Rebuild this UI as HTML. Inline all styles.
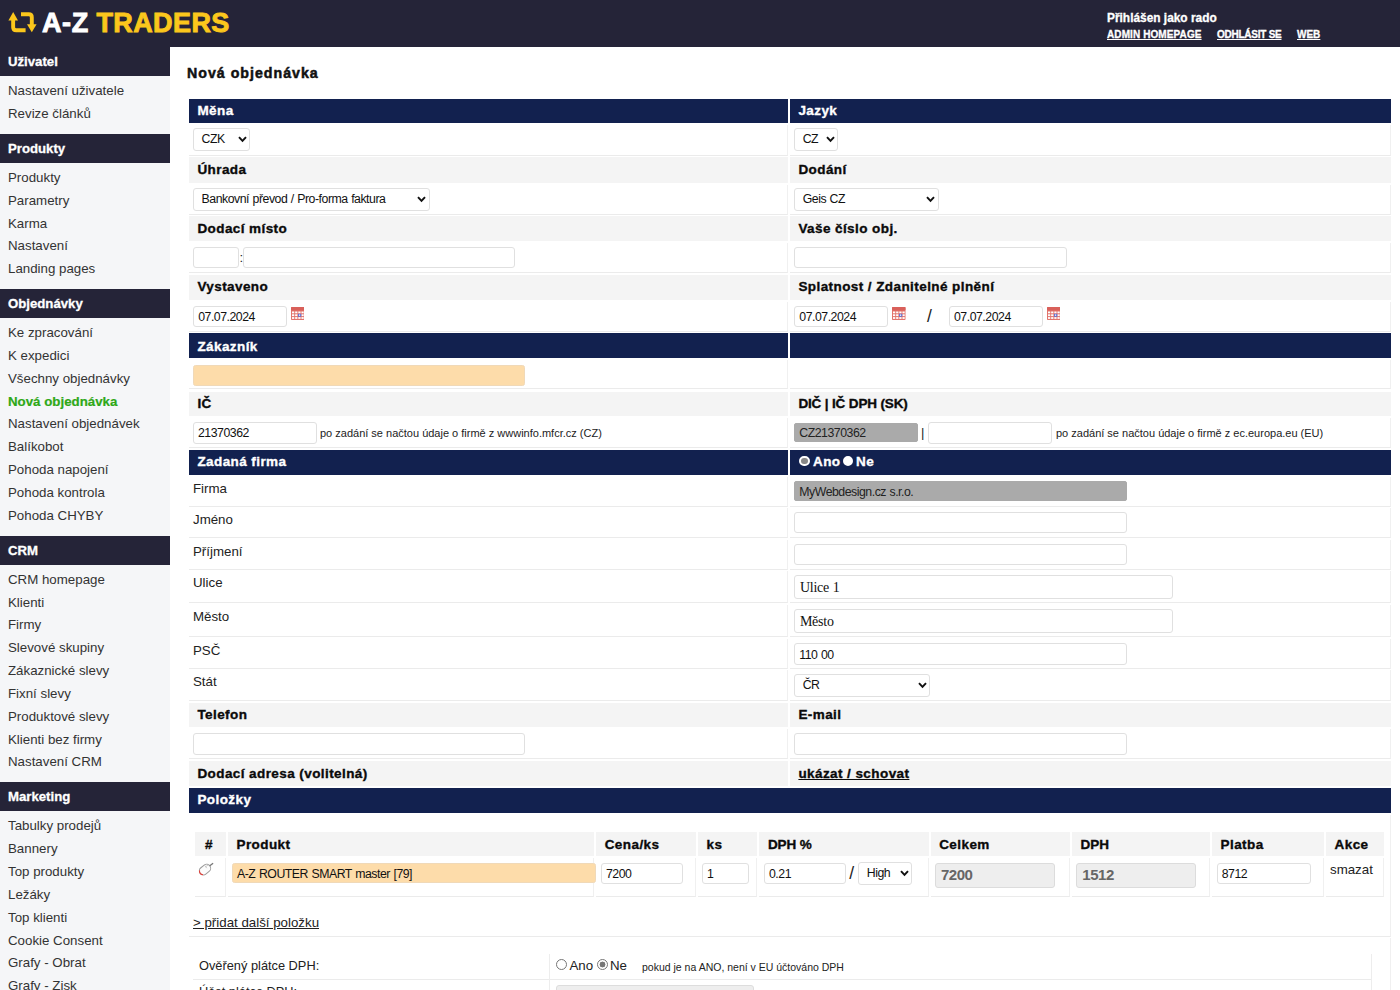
<!DOCTYPE html>
<html lang="cs">
<head>
<meta charset="utf-8">
<title>A-Z TRADERS - Nová objednávka</title>
<style>
*{box-sizing:border-box}
html,body{margin:0;padding:0}
body{width:1400px;height:990px;overflow:hidden;background:#fff;position:relative;font-family:"Liberation Sans",sans-serif;color:#1a1a1a}
#top{position:absolute;left:0;top:0;width:1400px;height:47px;background:#252438}
#logo{position:absolute;left:42px;top:7.2px;font-weight:bold;font-size:27px;line-height:32px;letter-spacing:.6px;color:#fff;white-space:nowrap;-webkit-text-stroke:.9px #fff}
#logo b{position:absolute;left:54.4px;top:0;color:#fbc71c;letter-spacing:.4px;-webkit-text-stroke:.9px #fbc71c}
#logoicon{position:absolute;left:8px;top:11px}
#user{position:absolute;left:1107px;top:10.6px;color:#fff;-webkit-text-stroke:.3px #fff;font-weight:bold;font-size:11.9px;line-height:14px;white-space:nowrap}
#toplinks{position:absolute;left:1107px;top:28px;color:#fff;-webkit-text-stroke:.3px #fff;font-weight:bold;font-size:10px;line-height:13px;white-space:nowrap}
#toplinks a{position:absolute;top:0;color:#fff;text-decoration:underline}
#side{position:absolute;left:0;top:47px;width:170px;height:943px;background:#f5f6f8;overflow:hidden}
#side h3{margin:0;height:29px;background:#252438;color:#fff;-webkit-text-stroke:.3px #fff;font-size:13.2px;line-height:29px;padding-left:8px;font-weight:bold}
#side ul{list-style:none;margin:0;padding:3.5px 0 8.5px 8px}
#side li{height:22.85px;line-height:22.85px;font-size:13.3px;color:#333;white-space:nowrap;position:relative;top:.7px}
#side li.act{color:#2ea817;font-weight:bold;-webkit-text-stroke:.2px #2ea817}
#main{position:absolute;left:170px;top:47px;width:1230px;height:943px;background:#fff}
h1{position:absolute;left:187px;top:62.6px;margin:0;font-size:14.2px;line-height:20px;font-weight:bold;color:#111;letter-spacing:1px;white-space:nowrap;-webkit-text-stroke:.5px #111}
.r{position:absolute;left:189px;width:1202px}
.c{position:absolute;top:0;height:100%;white-space:nowrap}
.c.l{left:0;width:599px}
.c.rr{left:601px;width:601px}
.c.f{left:0;width:1202px}
.dk .c{background:#12214f;color:#fff;font-weight:bold;font-size:13.5px;letter-spacing:.42px;padding-left:8.4px;padding-top:.4px;-webkit-text-stroke:.35px #fff}
.gy .c{background:#f4f4f4;color:#0a0a0a;font-weight:bold;font-size:13.5px;letter-spacing:.42px;padding-left:8.4px;padding-top:.4px;-webkit-text-stroke:.35px #0a0a0a}
.gy u{text-decoration:underline}
.td .c{border-bottom:1px solid #ebebeb;border-right:1px solid #f0f0f0;font-size:13px;color:#222;line-height:normal}
.td.nb .c{border-bottom:0}
.lb{position:absolute;left:4px;top:3px;font-size:13.3px;line-height:17px;color:#222}
.x{position:absolute;font-size:13px;color:#222;white-space:nowrap}
.x.sm{font-size:11px;color:#222}
.x.sm2{font-size:10.5px;color:#222}
div.t,span.sel{position:absolute;display:block;border:1px solid #e0e0e0;border-radius:3px;background:#fff;font:12.3px "Liberation Sans",sans-serif;letter-spacing:-.48px;color:#111;padding:1px 4px 0;margin:0;outline:0;word-spacing:.6px;white-space:pre;overflow:hidden}
div.pe{background:#fddcaa;border-color:#f0d9b8;border-radius:2.5px}
div.ro{background:#aaa;border-color:#aaa;color:#222;border-radius:2px}
div.ro2{background:#eee;border-color:#ddd}
div.se{font:14px "Liberation Serif",serif;letter-spacing:-.25px;padding-left:4.6px}
div.bgi{background:#eee;border-color:#dcdcdc;font-weight:bold;font-size:15px;color:#666;padding-left:5px;padding-top:0;padding-bottom:1px}

span.sel{padding:0 0 0 7.4px;overflow:hidden}
span.sel svg{position:absolute;right:2.2px;top:50%;margin-top:-3.5px}
.cal{position:absolute}
.rad{position:absolute;width:10.5px;height:10.5px;border-radius:50%;background:#888;border:2px solid #fff}
.rad.on{background:#fff}
.rad2{position:absolute;width:11px;height:11px;border-radius:50%;background:#fff;border:1px solid #767676}
.rad2.on{background:radial-gradient(circle,#767676 0 2.7px,#fff 3.2px)}
.ih{position:absolute;background:#f4f4f4;font-weight:bold;font-size:13.5px;letter-spacing:.42px;padding-top:1px;-webkit-text-stroke:.35px #0a0a0a;color:#0a0a0a;padding-left:8.6px}
.ic{position:absolute;border-bottom:1px solid #ebebeb;border-right:1px solid #f0f0f0}
.hl{position:absolute;height:1px;background:#ebebeb}
.vl{position:absolute;width:1px;background:#ededed}
</style>
</head>
<body>
<div id="top">
  <svg id="logoicon" width="30" height="23" viewBox="8 11 30 23"><g fill="#fbc71c"><path d="M13.2 11.9 L18 20.4 H8.4 Z"/><path d="M27 24.2 H36.6 L31.8 32.3 Z"/></g><g fill="none" stroke="#fbc71c" stroke-width="3.9"><path d="M13.15 19 V27.2 Q13.15 30.2 16.2 30.2 H25.6"/><path d="M21 14.2 H28.8 Q31.8 14.2 31.8 17.2 V25.5"/></g></svg>
  <div id="logo">A-Z <b>TRADERS</b></div>
  <div id="user">Přihlášen jako rado</div>
  <div id="toplinks"><a style="left:0;letter-spacing:.1px">ADMIN HOMEPAGE</a><a style="left:110px;letter-spacing:-.25px">ODHLÁSIT SE</a><a style="left:190px">WEB</a></div>
</div>
<div id="side">
  <h3>Uživatel</h3>
  <ul><li>Nastavení uživatele</li><li>Revize článků</li></ul>
  <h3>Produkty</h3>
  <ul><li>Produkty</li><li>Parametry</li><li>Karma</li><li>Nastavení</li><li>Landing pages</li></ul>
  <h3>Objednávky</h3>
  <ul><li>Ke zpracování</li><li>K expedici</li><li>Všechny objednávky</li><li class="act">Nová objednávka</li><li>Nastavení objednávek</li><li>Balíkobot</li><li>Pohoda napojení</li><li>Pohoda kontrola</li><li>Pohoda CHYBY</li></ul>
  <h3>CRM</h3>
  <ul><li>CRM homepage</li><li>Klienti</li><li>Firmy</li><li>Slevové skupiny</li><li>Zákaznické slevy</li><li>Fixní slevy</li><li>Produktové slevy</li><li>Klienti bez firmy</li><li>Nastavení CRM</li></ul>
  <h3>Marketing</h3>
  <ul><li>Tabulky prodejů</li><li>Bannery</li><li>Top produkty</li><li>Ležáky</li><li>Top klienti</li><li>Cookie Consent</li><li>Grafy - Obrat</li><li>Grafy - Zisk</li></ul>
</div>
<div id="main"></div>
<h1>Nová objednávka</h1>
<div class="r dk" style="top:98.5px;height:24.0px;line-height:24.0px"><div class="c l">Měna</div><div class="c rr">Jazyk</div></div>
<div class="r td" style="top:124.5px;height:31.5px;line-height:31.5px"><div class="c l"><span class="sel " style="left:4.199999999999989px;top:3.9000000000000057px;width:57px;height:22.7px;line-height:21.099999999999998px">CZK<svg width="9" height="6.75" viewBox="0 0 8 6"><path d="M.9 1 L4 4.3 L7.1 1" fill="none" stroke="#111" stroke-width="1.75"/></svg></span></div><div class="c rr"><span class="sel " style="left:4.2999999999999545px;top:3.9000000000000057px;width:44px;height:22.7px;line-height:21.099999999999998px">CZ<svg width="9" height="6.75" viewBox="0 0 8 6"><path d="M.9 1 L4 4.3 L7.1 1" fill="none" stroke="#111" stroke-width="1.75"/></svg></span></div></div>
<div class="r gy" style="top:157px;height:25.5px;line-height:25.5px"><div class="c l">Úhrada</div><div class="c rr">Dodání</div></div>
<div class="r td" style="top:184.5px;height:30.2px;line-height:30.2px"><div class="c l"><span class="sel n" style="left:4.199999999999989px;top:3.5px;width:236.4px;height:23.0px;line-height:21.4px">Bankovní převod / Pro-forma faktura<svg width="9" height="6.75" viewBox="0 0 8 6"><path d="M.9 1 L4 4.3 L7.1 1" fill="none" stroke="#111" stroke-width="1.75"/></svg></span></div><div class="c rr"><span class="sel n" style="left:4.2999999999999545px;top:3.5px;width:144.3px;height:23.0px;line-height:21.4px">Geis CZ<svg width="9" height="6.75" viewBox="0 0 8 6"><path d="M.9 1 L4 4.3 L7.1 1" fill="none" stroke="#111" stroke-width="1.75"/></svg></span></div></div>
<div class="r gy" style="top:216px;height:25px;line-height:25px"><div class="c l">Dodací místo</div><div class="c rr">Vaše číslo obj.</div></div>
<div class="r td" style="top:243px;height:30.3px;line-height:30.3px"><div class="c l"><div class="t " style="left:4.199999999999989px;top:4.199999999999989px;width:45.5px;height:21.3px;line-height:19.3px"></div><span class="x" style="left:50.5px;top:4px;line-height:21px">:</span><div class="t " style="left:53.5px;top:4.199999999999989px;width:272.5px;height:21.3px;line-height:19.3px"></div></div><div class="c rr"><div class="t " style="left:4.2999999999999545px;top:4.199999999999989px;width:272.3px;height:21.3px;line-height:19.3px"></div></div></div>
<div class="r gy" style="top:275px;height:24.8px;line-height:24.8px"><div class="c l">Vystaveno</div><div class="c rr">Splatnost / Zdanitelné plnění</div></div>
<div class="r td" style="top:301.8px;height:30.7px;line-height:30.7px"><div class="c l"><div class="t d" style="left:4.199999999999989px;top:4.5px;width:93.5px;height:20.3px;line-height:18.3px">07.07.2024</div><svg class="cal" style="left:101.89999999999998px;top:5.300000000000011px" width="13.5" height="13" viewBox="0 0 27 26"><rect width="27" height="26" rx="1.5" fill="#e2746c"/><rect width="27" height="7" rx="1.5" fill="#d9605a"/><g fill="#fff"><rect x="2" y="9" width="4.5" height="3.6"/><rect x="8.3" y="9" width="4.5" height="3.6"/><rect x="14.6" y="9" width="4.5" height="3.6"/><rect x="20.9" y="9" width="4.5" height="3.6"/><rect x="2" y="14.6" width="4.5" height="3.6"/><rect x="8.3" y="14.6" width="4.5" height="3.6"/><rect x="20.9" y="14.6" width="4.5" height="3.6"/><rect x="2" y="20.2" width="4.5" height="3.6"/><rect x="8.3" y="20.2" width="4.5" height="3.6"/><rect x="14.6" y="20.2" width="4.5" height="3.6"/><rect x="20.9" y="20.2" width="4.5" height="3.6"/></g><rect x="14" y="13.6" width="6.5" height="5.8" fill="#5b6fd6"/><rect x="15.8" y="15" width="2.6" height="2.6" fill="#fff"/></svg></div><div class="c rr"><div class="t d" style="left:4.2999999999999545px;top:4.5px;width:94.2px;height:20.3px;line-height:18.3px">07.07.2024</div><svg class="cal" style="left:102.10000000000002px;top:5.300000000000011px" width="13.5" height="13" viewBox="0 0 27 26"><rect width="27" height="26" rx="1.5" fill="#e2746c"/><rect width="27" height="7" rx="1.5" fill="#d9605a"/><g fill="#fff"><rect x="2" y="9" width="4.5" height="3.6"/><rect x="8.3" y="9" width="4.5" height="3.6"/><rect x="14.6" y="9" width="4.5" height="3.6"/><rect x="20.9" y="9" width="4.5" height="3.6"/><rect x="2" y="14.6" width="4.5" height="3.6"/><rect x="8.3" y="14.6" width="4.5" height="3.6"/><rect x="20.9" y="14.6" width="4.5" height="3.6"/><rect x="2" y="20.2" width="4.5" height="3.6"/><rect x="8.3" y="20.2" width="4.5" height="3.6"/><rect x="14.6" y="20.2" width="4.5" height="3.6"/><rect x="20.9" y="20.2" width="4.5" height="3.6"/></g><rect x="14" y="13.6" width="6.5" height="5.8" fill="#5b6fd6"/><rect x="15.8" y="15" width="2.6" height="2.6" fill="#fff"/></svg><span class="x" style="left:136.89999999999998px;top:4.5px;line-height:21px;font-size:17.5px">/</span><div class="t d" style="left:159px;top:4.5px;width:94.2px;height:20.3px;line-height:18.3px">07.07.2024</div><svg class="cal" style="left:256.79999999999995px;top:5.300000000000011px" width="13.5" height="13" viewBox="0 0 27 26"><rect width="27" height="26" rx="1.5" fill="#e2746c"/><rect width="27" height="7" rx="1.5" fill="#d9605a"/><g fill="#fff"><rect x="2" y="9" width="4.5" height="3.6"/><rect x="8.3" y="9" width="4.5" height="3.6"/><rect x="14.6" y="9" width="4.5" height="3.6"/><rect x="20.9" y="9" width="4.5" height="3.6"/><rect x="2" y="14.6" width="4.5" height="3.6"/><rect x="8.3" y="14.6" width="4.5" height="3.6"/><rect x="20.9" y="14.6" width="4.5" height="3.6"/><rect x="2" y="20.2" width="4.5" height="3.6"/><rect x="8.3" y="20.2" width="4.5" height="3.6"/><rect x="14.6" y="20.2" width="4.5" height="3.6"/><rect x="20.9" y="20.2" width="4.5" height="3.6"/></g><rect x="14" y="13.6" width="6.5" height="5.8" fill="#5b6fd6"/><rect x="15.8" y="15" width="2.6" height="2.6" fill="#fff"/></svg></div></div>
<div class="r dk" style="top:333.2px;height:25.0px;line-height:25.0px"><div class="c l">Zákazník</div><div class="c rr"></div></div>
<div class="r td" style="top:360.2px;height:29.3px;line-height:29.3px"><div class="c l"><div class="t pe" style="left:4px;top:4.800000000000011px;width:331.5px;height:21px;line-height:19px"></div></div><div class="c rr"></div></div>
<div class="r gy" style="top:392px;height:24.2px;line-height:24.2px"><div class="c l">IČ</div><div class="c rr"><span style="letter-spacing:-.15px">DIČ | IČ DPH (SK)</span></div></div>
<div class="r td" style="top:418.2px;height:30.1px;line-height:30.1px"><div class="c l"><div class="t ic13" style="left:4px;top:4.0px;width:123.5px;height:21.5px;line-height:19.5px">21370362</div><span class="x sm" style="left:131px;top:3.8000000000000114px;line-height:22px">po zadání se načtou údaje o firmě z wwwinfo.mfcr.cz (CZ)</span></div><div class="c rr"><div class="t ro" style="left:4.2999999999999545px;top:4.800000000000011px;width:123.5px;height:19.5px;line-height:17.5px">CZ21370362</div><span class="x" style="left:131px;top:3.8000000000000114px;line-height:21px">|</span><div class="t " style="left:138.39999999999998px;top:4.0px;width:123.6px;height:21.5px;line-height:19.5px"></div><span class="x sm" style="left:266px;top:3.8000000000000114px;line-height:22px">po zadání se načtou údaje o firmě z ec.europa.eu (EU)</span></div></div>
<div class="r dk" style="top:450px;height:24.7px;line-height:24.7px"><div class="c l">Zadaná firma</div><div class="c rr"><span class="rad" style="left:9.2px;top:5.6px"></span><span class="rad on" style="left:52.5px;top:5.6px"></span><span style="position:absolute;left:23px">Ano</span><span style="position:absolute;left:66px">Ne</span></div></div>
<div class="r td lbl" style="top:476.7px;height:30.1px;line-height:30.1px"><div class="c l"><span class="lb">Firma</span></div><div class="c rr"><div class="t ro" style="left:4.2999999999999545px;top:4.800000000000011px;width:332.6px;height:20px;line-height:18px">MyWebdesign.cz s.r.o.</div></div></div>
<div class="r td lbl" style="top:508.3px;height:29.7px;line-height:29.7px"><div class="c l"><span class="lb">Jméno</span></div><div class="c rr"><div class="t " style="left:4.2999999999999545px;top:3.900000000000034px;width:332.6px;height:21.2px;line-height:19.2px"></div></div></div>
<div class="r td lbl" style="top:539.5px;height:30.0px;line-height:30.0px"><div class="c l"><span class="lb">Příjmení</span></div><div class="c rr"><div class="t " style="left:4.2999999999999545px;top:4.2999999999999545px;width:332.6px;height:21.2px;line-height:19.2px"></div></div></div>
<div class="r td lbl" style="top:571px;height:32.2px;line-height:32.2px"><div class="c l"><span class="lb">Ulice</span></div><div class="c rr"><div class="t se" style="left:4.2999999999999545px;top:4px;width:378.5px;height:23.6px;line-height:21.6px">Ulice 1</div></div></div>
<div class="r td lbl" style="top:604.7px;height:32.3px;line-height:32.3px"><div class="c l"><span class="lb">Město</span></div><div class="c rr"><div class="t se" style="left:4.2999999999999545px;top:4.2999999999999545px;width:378.5px;height:23.6px;line-height:21.6px">Město</div></div></div>
<div class="r td lbl" style="top:638.5px;height:30.3px;line-height:30.3px"><div class="c l"><span class="lb">PSČ</span></div><div class="c rr"><div class="t " style="left:4.2999999999999545px;top:4.5px;width:332.6px;height:22px;line-height:20px">110 00</div></div></div>
<div class="r td lbl" style="top:670.3px;height:30.5px;line-height:30.5px"><div class="c l"><span class="lb">Stát</span></div><div class="c rr"><span class="sel n" style="left:4.2999999999999545px;top:3.7000000000000455px;width:136px;height:22.9px;line-height:21.299999999999997px">ČR<svg width="9" height="6.75" viewBox="0 0 8 6"><path d="M.9 1 L4 4.3 L7.1 1" fill="none" stroke="#111" stroke-width="1.75"/></svg></span></div></div>
<div class="r gy" style="top:703px;height:24px;line-height:24px"><div class="c l">Telefon</div><div class="c rr">E-mail</div></div>
<div class="r td" style="top:729px;height:29.7px;line-height:29.7px"><div class="c l"><div class="t " style="left:4px;top:4.2000000000000455px;width:331.8px;height:21.6px;line-height:19.6px"></div></div><div class="c rr"><div class="t " style="left:4.2999999999999545px;top:4.2000000000000455px;width:332.6px;height:21.6px;line-height:19.6px"></div></div></div>
<div class="r gy" style="top:760.8px;height:25.2px;line-height:25.2px"><div class="c l">Dodací adresa (volitelná)</div><div class="c rr"><u>ukázat / schovat</u></div></div>
<div class="r dk" style="top:787.8px;height:24.8px;line-height:24.8px"><div class="c f">Položky</div></div>
<div class="r td big" style="top:814.6px;height:122.2px;line-height:122.2px"><div class="c f"><div class="ih" style="left:5.900000000000006px;top:17.899999999999977px;width:30.69999999999999px;height:23.7px;line-height:23.7px;text-align:center;padding-left:0;padding-right:2.6px">#</div><div class="ic" style="left:5.900000000000006px;top:43.60000000000002px;width:30.69999999999999px;height:38.59999999999991px"></div><div class="ih" style="left:38.900000000000006px;top:17.899999999999977px;width:366.4px;height:23.7px;line-height:23.7px">Produkt</div><div class="ic" style="left:38.900000000000006px;top:43.60000000000002px;width:366.4px;height:38.59999999999991px"></div><div class="ih" style="left:407.1px;top:17.899999999999977px;width:99.89999999999998px;height:23.7px;line-height:23.7px">Cena/ks</div><div class="ic" style="left:407.1px;top:43.60000000000002px;width:99.89999999999998px;height:38.59999999999991px"></div><div class="ih" style="left:508.9px;top:17.899999999999977px;width:59.5px;height:23.7px;line-height:23.7px">ks</div><div class="ic" style="left:508.9px;top:43.60000000000002px;width:59.5px;height:38.59999999999991px"></div><div class="ih" style="left:570.3px;top:17.899999999999977px;width:169.30000000000007px;height:23.7px;line-height:23.7px;letter-spacing:-.1px">DPH %</div><div class="ic" style="left:570.3px;top:43.60000000000002px;width:169.30000000000007px;height:38.59999999999991px"></div><div class="ih" style="left:741.6px;top:17.899999999999977px;width:139.39999999999998px;height:23.7px;line-height:23.7px">Celkem</div><div class="ic" style="left:741.6px;top:43.60000000000002px;width:139.39999999999998px;height:38.59999999999991px"></div><div class="ih" style="left:883px;top:17.899999999999977px;width:138px;height:23.7px;line-height:23.7px;letter-spacing:-.1px">DPH</div><div class="ic" style="left:883px;top:43.60000000000002px;width:138px;height:38.59999999999991px"></div><div class="ih" style="left:1023px;top:17.899999999999977px;width:111.79999999999995px;height:23.7px;line-height:23.7px">Platba</div><div class="ic" style="left:1023px;top:43.60000000000002px;width:111.79999999999995px;height:38.59999999999991px"></div><div class="ih" style="left:1137px;top:17.899999999999977px;width:57.59999999999991px;height:23.7px;line-height:23.7px">Akce</div><div class="ic" style="left:1137px;top:43.60000000000002px;width:57.59999999999991px;height:38.59999999999991px"></div><svg class="cal" style="left:9px;top:46.39999999999998px" width="16" height="16" viewBox="0 0 16 16"><g transform="rotate(-38 7 8.6)"><rect x=".9" y="4.6" width="12.2" height="8" rx="4" fill="#fcfcfc" stroke="#9a9a9a" stroke-width="1"/><path d="M2.2 5.9 Q.9 7 .9 8.6 Q.9 10.3 2.3 11.4" fill="none" stroke="#e0403a" stroke-width="1.1"/><path d="M9.3 5 V8.6 M9.3 6.8 H12.8" stroke="#c4c4c4" stroke-width=".8" fill="none"/><path d="M13.1 8.6 H17.3" stroke="#777" stroke-width="1.3"/></g></svg><div class="t pe" style="left:43px;top:48.39999999999998px;width:363.5px;height:20.3px;line-height:18.3px">A-Z ROUTER SMART master [79]</div><div class="t d" style="left:412px;top:48.0px;width:81.5px;height:21.2px;line-height:19.2px">7200</div><div class="t d" style="left:513px;top:48.0px;width:46.5px;height:21.2px;line-height:19.2px">1</div><div class="t d" style="left:575px;top:48.0px;width:81.5px;height:21.2px;line-height:19.2px">0.21</div><span class="x" style="left:660.3px;top:48.0px;line-height:21px;font-size:17.5px">/</span><span class="sel d" style="left:669.4px;top:47.799999999999955px;width:53.6px;height:22.3px;line-height:20.7px">High<svg width="9" height="6.75" viewBox="0 0 8 6"><path d="M.9 1 L4 4.3 L7.1 1" fill="none" stroke="#111" stroke-width="1.75"/></svg></span><div class="t bgi" style="left:746px;top:48.19999999999993px;width:120px;height:24.8px;line-height:22.8px">7200</div><div class="t bgi" style="left:887.3px;top:48.19999999999993px;width:119.6px;height:24.8px;line-height:22.8px">1512</div><div class="t d" style="left:1027.7px;top:48.0px;width:94.6px;height:21.2px;line-height:19.2px">8712</div><span class="x" style="left:1141px;top:45.39999999999998px;line-height:20px;font-size:13.3px">smazat</span><span class="x" style="left:4px;top:98.69999999999993px;line-height:20px;font-size:13.3px;text-decoration:underline">&gt; přidat další položku</span></div></div>
<div class="r td big nb" style="top:938.3px;height:57.2px;line-height:57.2px"><div class="c f"><div class="hl" style="left:4px;top:40.30000000000007px;width:1178.5px"></div><div class="vl" style="left:360px;top:15.700000000000045px;height:42px"></div><div class="vl" style="left:1182px;top:15.700000000000045px;height:42px"></div><span class="x" style="left:10px;top:18.200000000000045px;line-height:20px;font-size:12.8px">Ověřený plátce DPH:</span><span class="rad2" style="left:366.5px;top:21.200000000000045px"></span><span class="x" style="left:380.5px;top:17.700000000000045px;line-height:20px;font-size:13.3px">Ano</span><span class="rad2 on" style="left:407.5px;top:21.200000000000045px"></span><span class="x" style="left:421px;top:17.700000000000045px;line-height:20px;font-size:13.3px">Ne</span><span class="x sm2" style="left:453px;top:18.700000000000045px;line-height:20px">pokud je na ANO, není v EU účtováno DPH</span><span class="x" style="left:10px;top:44.0px;line-height:20px;font-size:12.8px">Účet plátce DPH:</span><div class="t ro2" style="left:366.5px;top:47.200000000000045px;width:198px;height:21px;line-height:19px"></div></div></div>
</body>
</html>
